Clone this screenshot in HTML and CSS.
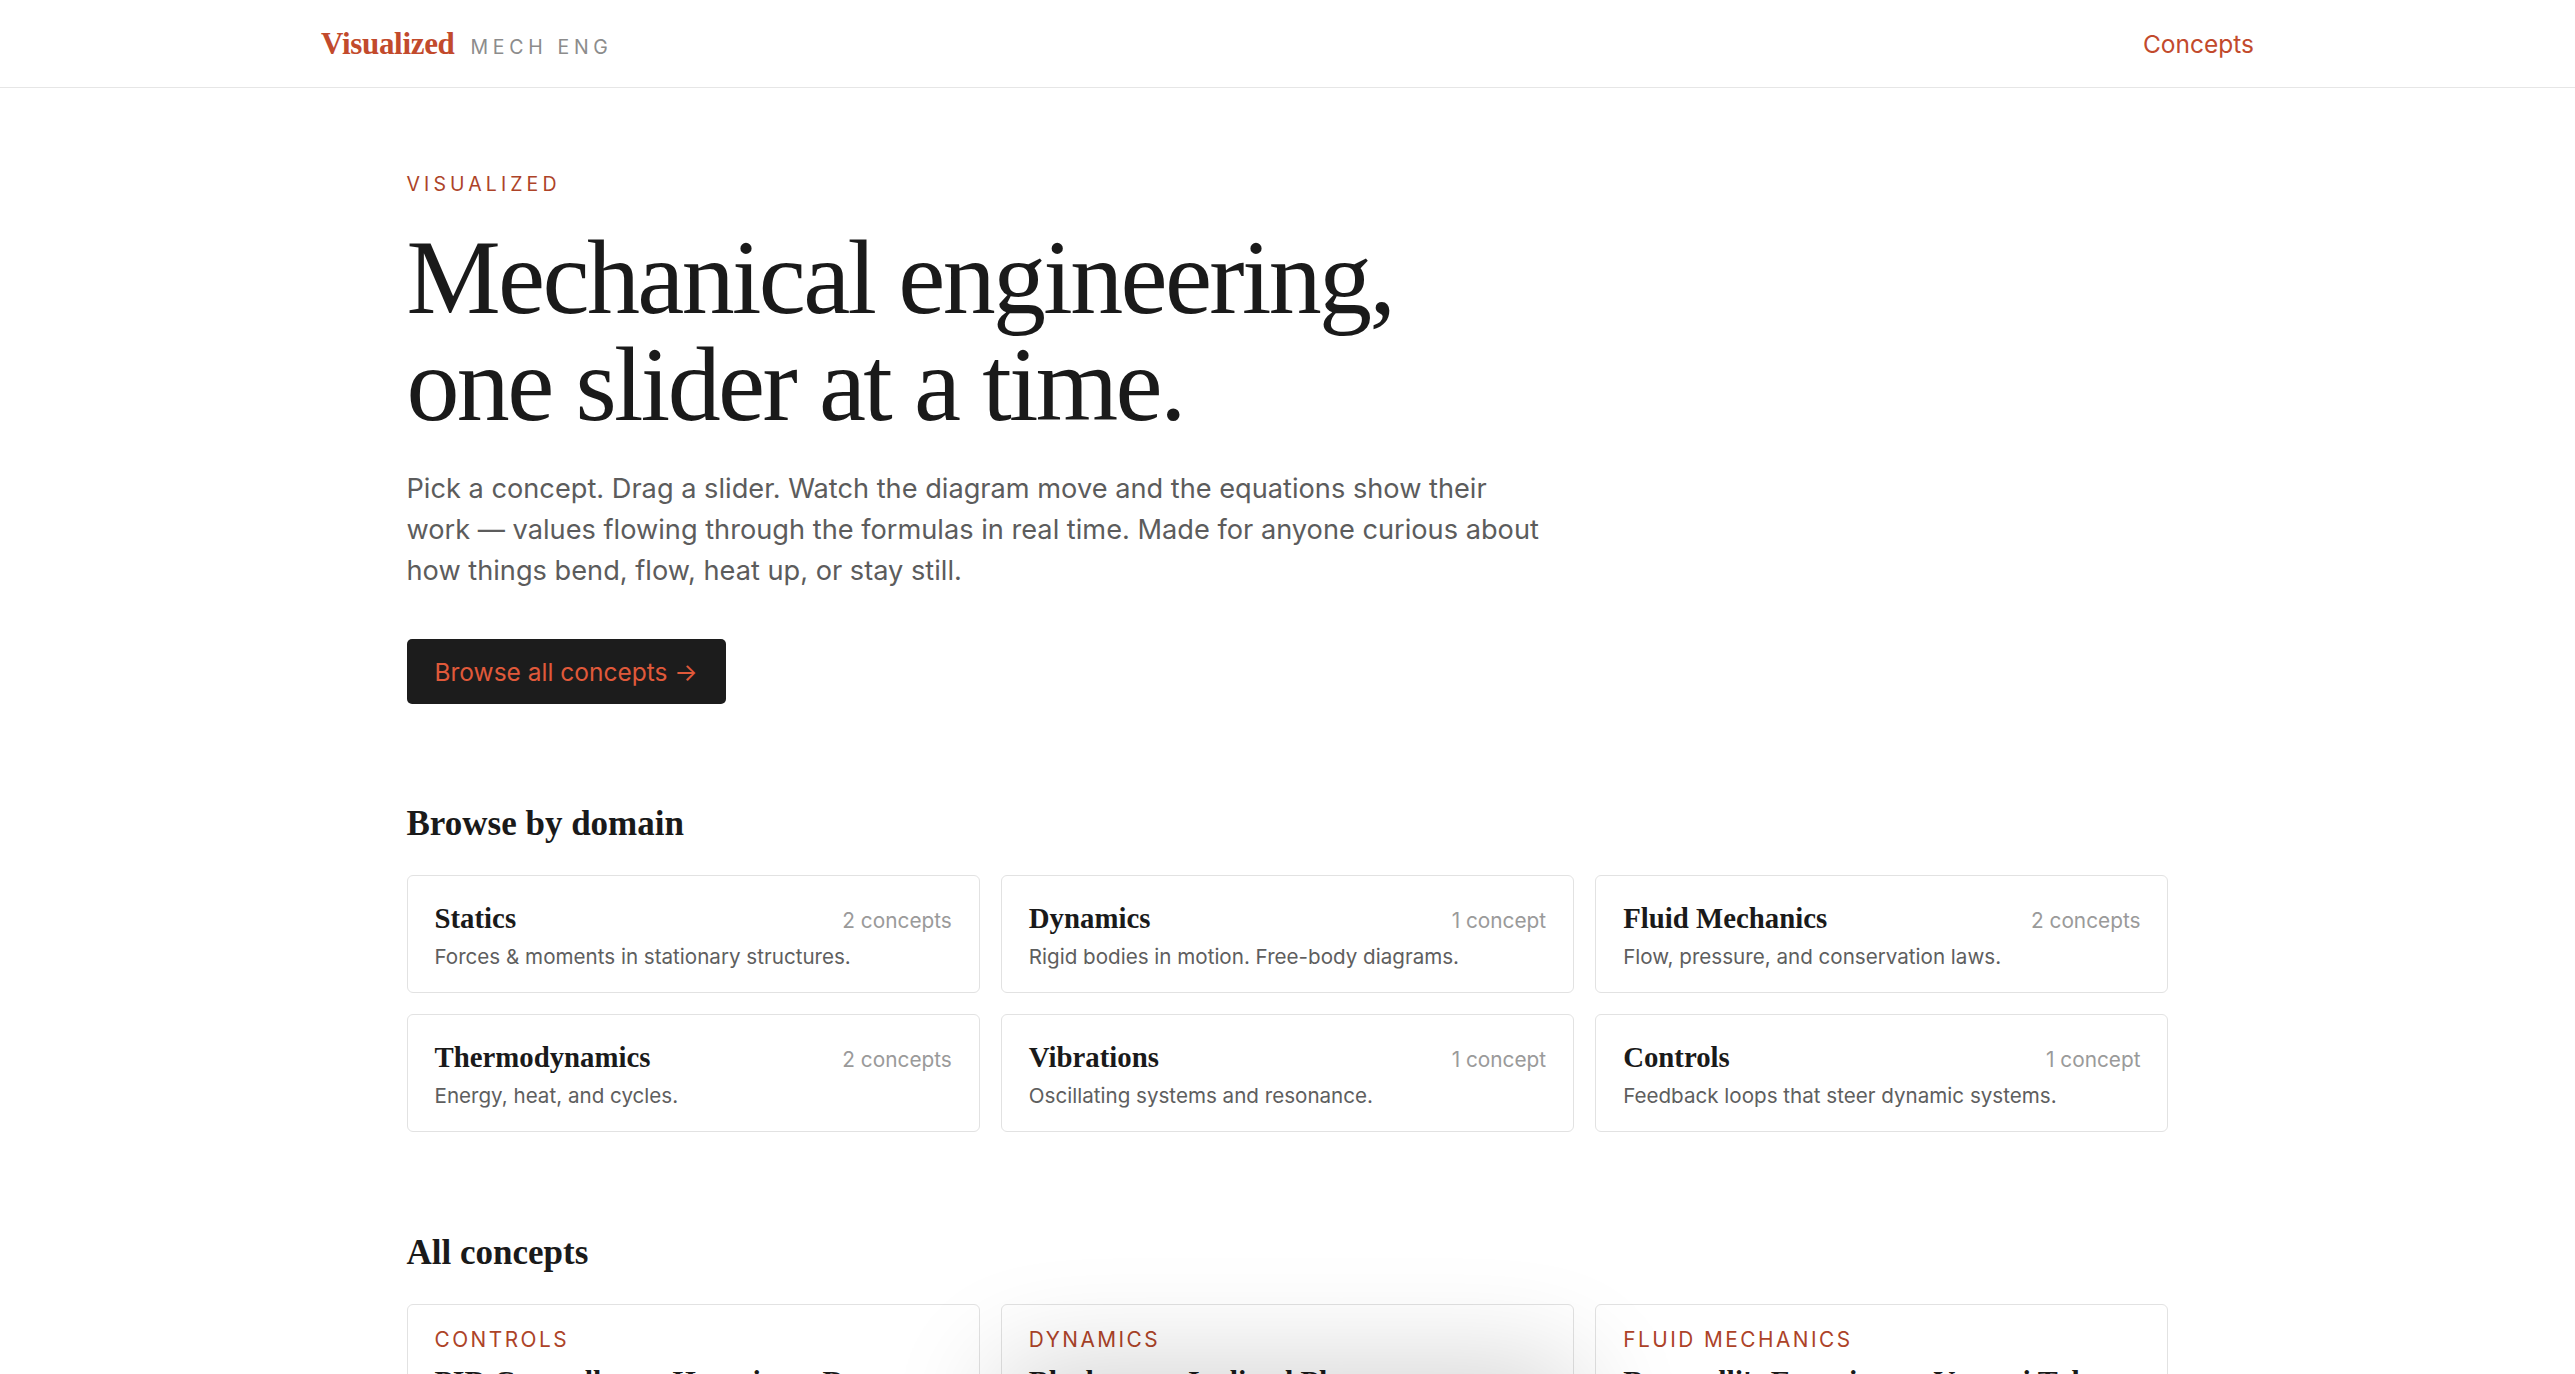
FILE: index.html
```html
<!DOCTYPE html>
<html>
<head>
  <title>Visualized | Mech Eng</title>
  <link rel="stylesheet" href="styles.css">
</head>
<body>
  <header class="topbar">
    <div class="topbar-inner">
      <a href="/" class="brand">
        <span class="brand-name">Visualized</span>
        <span class="brand-sub">MECH ENG</span>
      </a>
      <nav class="nav">
        <a href="/concepts">Concepts</a>
      </nav>
    </div>
  </header>

  <main class="page">
    <section class="hero">
      <div class="eyebrow">VISUALIZED</div>
      <h1>Mechanical engineering,<br>one slider at a time.</h1>
      <p class="lead">Pick a concept. Drag a slider. Watch the diagram move and the equations show their work — values flowing through the formulas in real time. Made for anyone curious about how things bend, flow, heat up, or stay still.</p>
      <a href="/concepts" class="btn">Browse all concepts →</a>
    </section>

    <section class="block">
      <h2>Browse by domain</h2>
      <div class="grid">
        <a class="domain" href="/domain/statics">
          <div class="domain-top"><span class="domain-name">Statics</span><span class="count">2 concepts</span></div>
          <div class="domain-desc">Forces &amp; moments in stationary structures.</div>
        </a>
        <a class="domain" href="/domain/dynamics">
          <div class="domain-top"><span class="domain-name">Dynamics</span><span class="count">1 concept</span></div>
          <div class="domain-desc">Rigid bodies in motion. Free-body diagrams.</div>
        </a>
        <a class="domain" href="/domain/fluids">
          <div class="domain-top"><span class="domain-name">Fluid Mechanics</span><span class="count">2 concepts</span></div>
          <div class="domain-desc">Flow, pressure, and conservation laws.</div>
        </a>
        <a class="domain" href="/domain/thermo">
          <div class="domain-top"><span class="domain-name">Thermodynamics</span><span class="count">2 concepts</span></div>
          <div class="domain-desc">Energy, heat, and cycles.</div>
        </a>
        <a class="domain" href="/domain/vibrations">
          <div class="domain-top"><span class="domain-name">Vibrations</span><span class="count">1 concept</span></div>
          <div class="domain-desc">Oscillating systems and resonance.</div>
        </a>
        <a class="domain" href="/domain/controls">
          <div class="domain-top"><span class="domain-name">Controls</span><span class="count">1 concept</span></div>
          <div class="domain-desc">Feedback loops that steer dynamic systems.</div>
        </a>
      </div>
    </section>

    <section class="block block-concepts">
      <h2>All concepts</h2>
      <div class="grid">
        <a class="concept" href="/c/pid-drone">
          <div class="concept-tag">CONTROLS</div>
          <div class="concept-title">PID Controller — Hovering a Drone</div>
          <div class="concept-desc">Tune proportional, integral and derivative gains.</div>
        </a>
        <a class="concept" href="/c/inclined-plane">
          <div class="concept-tag">DYNAMICS</div>
          <div class="concept-title">Block on an Inclined Plane</div>
          <div class="concept-desc">Friction, gravity and the normal force.</div>
        </a>
        <a class="concept" href="/c/venturi">
          <div class="concept-tag">FLUID MECHANICS</div>
          <div class="concept-title">Bernoulli's Equation — Venturi Tube</div>
          <div class="concept-desc">Pressure drops where the flow speeds up.</div>
        </a>
      </div>
    </section>
  </main>

  <div class="toast"></div>
</body>
</html>
```

FILE: styles.css
```css
* {
  box-sizing: border-box;
}
body {
  margin: 0;
  font-family: Inter, "Noto Sans", sans-serif;
  color: #1a1a1a;
  background: #fff;
}
a {
  text-decoration: none;
  color: inherit;
}

/* top bar */
.topbar {
  border-bottom: 1px solid #e6e6e6;
}
.topbar-inner {
  max-width: 1933px;
  margin: 0 auto;
  height: 87px;
  display: flex;
  align-items: center;
  justify-content: space-between;
}
.brand {
  display: flex;
  align-items: baseline;
  gap: 16px;
}
.brand-name {
  font-family: "Liberation Serif", serif;
  font-weight: bold;
  font-size: 31px;
  color: #c24a2c;
  letter-spacing: -0.01em;
}
.brand-sub {
  font-size: 19.5px;
  letter-spacing: 0.24em;
  color: #8c8c8c;
}
.nav a {
  font-size: 24.5px;
  color: #c24a2c;
}

/* page */
.page {
  max-width: 1762px;
  margin: 0 auto;
}
.hero {
  padding-top: 84px;
}
.eyebrow {
  font-size: 19.5px;
  letter-spacing: 0.21em;
  color: #ad4328;
}
h1 {
  font-family: "Liberation Serif", serif;
  font-weight: normal;
  font-size: 106px;
  line-height: 107px;
  letter-spacing: -0.025em;
  margin: 28px 0 0;
  color: #1a1a1a;
}
.lead {
  font-size: 27.2px;
  line-height: 41px;
  color: #5c5c5c;
  max-width: 1144px;
  margin: 30px 0 0;
}
.btn {
  display: inline-flex;
  align-items: center;
  height: 65px;
  padding: 0 28px;
  margin-top: 48px;
  background: #1c1c1c;
  color: #e0593a;
  font-size: 24.5px;
  border-radius: 5px;
}

/* sections */
.block {
  margin-top: 100px;
}
.block h2 {
  font-family: "Liberation Serif", serif;
  font-weight: bold;
  font-size: 35px;
  margin: 0 0 31px;
  color: #1a1a1a;
}
.block-concepts {
  margin-top: 101px;
}
.grid {
  display: grid;
  grid-template-columns: repeat(3, 1fr);
  gap: 21px;
}
.domain {
  border: 1px solid #e2e2e2;
  border-radius: 6px;
  padding: 26px 27px 24px;
  height: 118px;
}
.domain-top {
  display: flex;
  justify-content: space-between;
  align-items: baseline;
}
.domain-name {
  font-family: "Liberation Serif", serif;
  font-weight: bold;
  font-size: 28.8px;
}
.count {
  font-size: 20.8px;
  color: #9a9a9a;
}
.domain-desc {
  font-size: 20.6px;
  color: #5e5e5e;
  margin-top: 9px;
}

.concept {
  border: 1px solid #e2e2e2;
  border-radius: 6px;
  padding: 22px 27px 24px;
}
.concept-tag {
  font-size: 20.8px;
  letter-spacing: 0.12em;
  color: #ad4328;
}
.concept-title {
  font-family: "Liberation Serif", serif;
  font-weight: bold;
  font-size: 30px;
  margin-top: 12px;
}
.concept-desc {
  font-size: 20.6px;
  color: #5e5e5e;
  margin-top: 10px;
}

.toast {
  position: fixed;
  left: 50%;
  bottom: -80px;
  transform: translateX(-50%);
  width: 520px;
  height: 60px;
  background: #fff;
  border-radius: 8px;
  box-shadow: 0 0 110px 30px rgba(0, 0, 0, 0.18);
}
```
